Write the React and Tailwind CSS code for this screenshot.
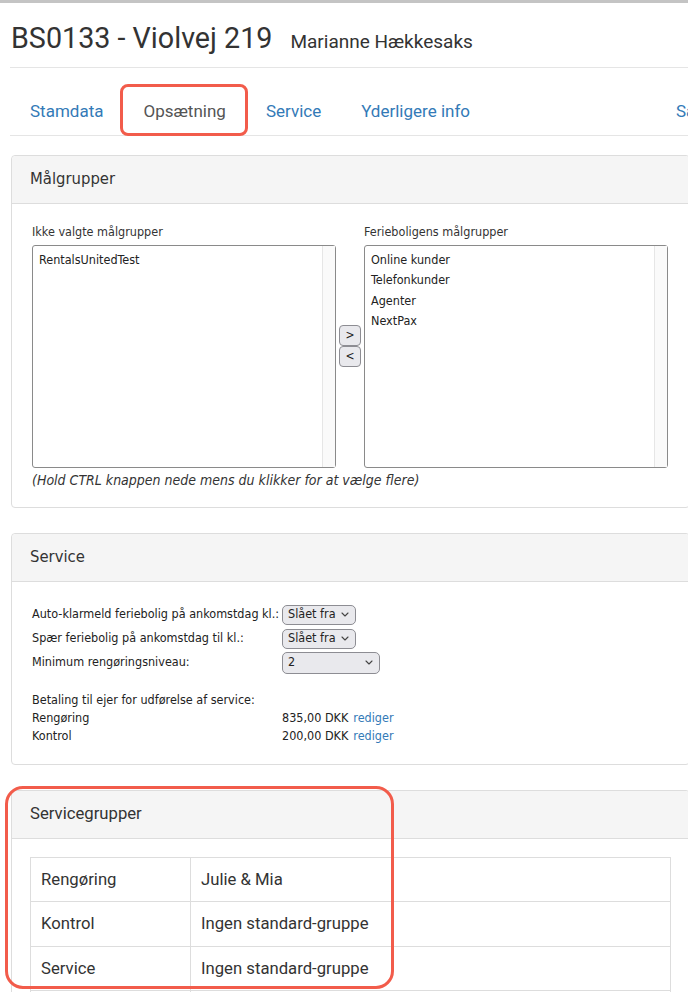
import React from 'react';

const roboto = { fontFamily: 'Roboto, "Liberation Sans", sans-serif' };
const tahoma = { fontFamily: '"DejaVu Sans Condensed", "Liberation Sans", sans-serif' };

const Chevron = () => (
  <svg width="8" height="5" viewBox="0 0 8 5" className="shrink-0">
    <polyline points="1,1 4,4 7,1" fill="none" stroke="#444" strokeWidth="1.1" strokeLinecap="round" strokeLinejoin="round" />
  </svg>
);

const FakeSelect = ({ value, width, height }) => (
  <div
    className={`flex items-center justify-between rounded-[5px] border border-[#8d8d93] bg-[#e9e9ed] pl-[5px] pr-[6px] text-[12.5px] text-[#222] ${width} ${height}`}
  >
    <span>{value}</span>
    <Chevron />
  </div>
);

const ListBox = ({ items }) => (
  <div className="relative h-[223px] rounded-[3px] border border-[#8a8a8a] bg-white">
    <div className="pt-[4px] pl-[6px]">
      {items.map((it) => (
        <div key={it} className="h-[20.5px] leading-[20px] text-[12.5px] text-[#222]">
          {it}
        </div>
      ))}
    </div>
    <div className="absolute right-0 top-0 bottom-0 w-[13px] border-l border-[#e6e6e6] bg-[#fafafa]" />
  </div>
);

const SmallBtn = ({ children }) => (
  <div className="flex h-[21px] w-[22px] items-center justify-center rounded-[4px] border border-[#8d8d93] bg-[#e9e9ed] text-[12px] leading-none text-[#222]">
    {children}
  </div>
);

const Panel = ({ title, headerFont, headerSize, children, bodyClass }) => (
  <div className="rounded-[4px] border border-[#ddd] bg-white">
    <div
      className={`h-[48px] flex items-center px-[18px] bg-[#f5f5f5] border-b border-[#ddd] text-[#333] rounded-t-[4px] ${headerSize}`}
      style={headerFont}
    >
      {title}
    </div>
    <div className={bodyClass}>{children}</div>
  </div>
);

const serviceGroups = [
  ['Rengøring', 'Julie & Mia'],
  ['Kontrol', 'Ingen standard-gruppe'],
  ['Service', 'Ingen standard-gruppe'],
  ['', ''],
];

export default function App() {
  return (
    <div className="relative w-[688px] h-[992px] overflow-hidden bg-white text-[#333]">
      <div className="h-[3px] bg-[#c4c4c4]" />

      <div className="ml-[10px] w-[680px]">
        {/* page header */}
        <div className="flex items-baseline gap-[18px] pt-[19px] pb-[10px] pl-[1px] border-b border-[#e5e5e5]" style={roboto}>
          <h1 className="text-[28.7px] leading-[32px] text-[#333]">BS0133 - Violvej 219</h1>
          <span className="text-[19px] text-[#333]">Marianne Hækkesaks</span>
        </div>

        {/* tabs */}
        <ul className="mt-[25px] flex w-[720px] border-b border-[#e5e5e5] text-[17px] whitespace-nowrap" style={roboto}>
          <li className="shrink-0 px-[20px] pt-[7px] pb-[13px] leading-[22px] text-[#337ab7]">Stamdata</li>
          <li className="shrink-0 px-[20px] pt-[7px] pb-[13px] leading-[22px] text-[#555]">Opsætning</li>
          <li className="shrink-0 px-[20px] pt-[7px] pb-[13px] leading-[22px] text-[#337ab7]">Service</li>
          <li className="shrink-0 px-[20px] pt-[7px] pb-[13px] leading-[22px] text-[#337ab7]">Yderligere info</li>
          <li className="shrink-0 pl-[186px] pt-[7px] pb-[13px] leading-[22px] text-[#337ab7]">Sager</li>
        </ul>

        <div className="mt-[19px] ml-[1px] flex flex-col gap-[25px]">
          {/* Målgrupper */}
          <Panel title="Målgrupper" headerFont={tahoma} headerSize="text-[16.5px]" bodyClass="px-[20px] pt-[20px] pb-[18px]">
            <div className="flex" style={tahoma}>
              <div className="w-[304px]">
                <div className="mb-[5px] text-[12.5px] leading-[16px] text-[#333]">Ikke valgte målgrupper</div>
                <ListBox items={['RentalsUnitedTest']} />
              </div>
              <div className="w-[28px] flex flex-col items-center pt-[101px]">
                <SmallBtn>&gt;</SmallBtn>
                <SmallBtn>&lt;</SmallBtn>
              </div>
              <div className="w-[304px]">
                <div className="mb-[5px] text-[12.5px] leading-[16px] text-[#333]">Ferieboligens målgrupper</div>
                <ListBox items={['Online kunder', 'Telefonkunder', 'Agenter', 'NextPax']} />
              </div>
            </div>
            <p className="mt-[3px] text-[14px] leading-[18px] italic text-[#333]" style={tahoma}>
              (Hold CTRL knappen nede mens du klikker for at vælge flere)
            </p>
          </Panel>

          {/* Service */}
          <Panel title="Service" headerFont={tahoma} headerSize="text-[16.5px]" bodyClass="px-[20px] pt-[21px] pb-[19px]">
            <div className="text-[12.5px] text-[#222]" style={tahoma}>
              <div className="flex h-[24px] items-center">
                <span className="w-[250px] whitespace-nowrap">Auto-klarmeld feriebolig på ankomstdag kl.:</span>
                <FakeSelect value="Slået fra" width="w-[74px]" height="h-[20px]" />
              </div>
              <div className="flex h-[24px] items-center">
                <span className="w-[250px] whitespace-nowrap">Spær feriebolig på ankomstdag til kl.:</span>
                <FakeSelect value="Slået fra" width="w-[74px]" height="h-[20px]" />
              </div>
              <div className="flex h-[24px] items-center">
                <span className="w-[250px] whitespace-nowrap">Minimum rengøringsniveau:</span>
                <FakeSelect value="2" width="w-[98px]" height="h-[22px]" />
              </div>

              <div className="mt-[16px] leading-[18px]">Betaling til ejer for udførelse af service:</div>
              <div className="flex leading-[18px]">
                <span className="w-[250px]">Rengøring</span>
                <span>835,00 DKK</span>
                <span className="ml-[5px] text-[#337ab7]">rediger</span>
              </div>
              <div className="flex leading-[18px]">
                <span className="w-[250px]">Kontrol</span>
                <span>200,00 DKK</span>
                <span className="ml-[5px] text-[#337ab7]">rediger</span>
              </div>
            </div>
          </Panel>

          {/* Servicegrupper */}
          <Panel title="Servicegrupper" headerFont={roboto} headerSize="text-[16.7px]" bodyClass="px-[18px] pt-[18px] pb-[18px]">
            <table className="w-full border-collapse text-[16.7px] text-[#333]" style={roboto}>
              <tbody>
                {serviceGroups.map(([a, b], i) => (
                  <tr key={i} className="h-[44.5px]">
                    <td className="w-[160px] border border-[#ddd] px-[10px]">{a}</td>
                    <td className="border border-[#ddd] px-[10px]">{b}</td>
                  </tr>
                ))}
              </tbody>
            </table>
          </Panel>
        </div>
      </div>

      {/* annotation boxes */}
      <div className="absolute left-[120px] top-[84px] w-[128px] h-[52px] rounded-[8px] border-[3px] border-[#f25c4b]" />
      <div className="absolute left-[5px] top-[786px] w-[389px] h-[203px] rounded-[18px] border-[3px] border-[#f25c4b]" />
    </div>
  );
}
